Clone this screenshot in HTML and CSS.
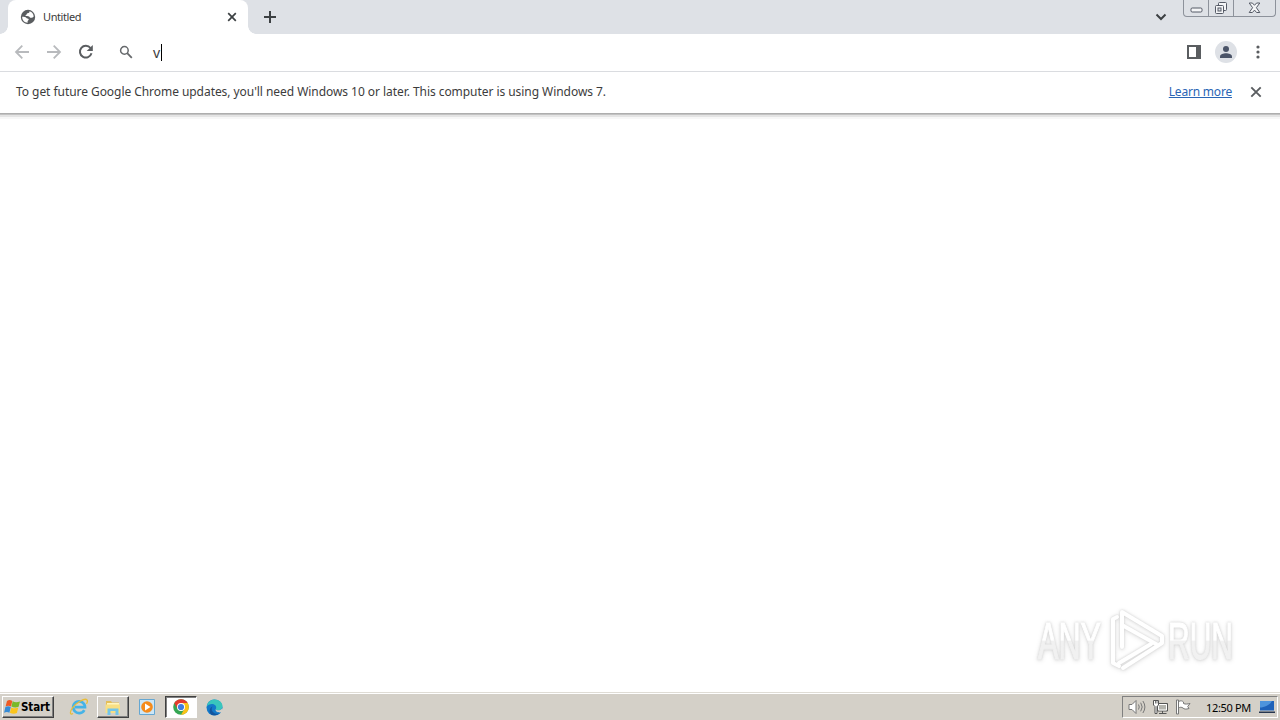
FILE: index.html
```
<!DOCTYPE html>
<html lang="en">

<head>
	<meta charset="UTF-8">
	<meta name="viewport" content="width=device-width, initial-scale=1.0">
	<title>Untitled</title>
	<link rel="stylesheet" href="styles.css">
</head>

<body>
	<div class="browser">
		<div class="tab-strip">
			<div class="tab">
				<svg class="globe" width="16" height="16" viewBox="0 0 16 16">
					<circle cx="8" cy="8" r="7.2" fill="#5a5d60"/>
					<path d="M2.200 7.800c1.800 0 3.500.2 4.300 1.200.6.800 1.800.3 2.200 1.300.3.900-.9 1.200-1.100 2-.1.600 0 1 .1 1.500C4.400 13.800 2 11 2.200 7.800zM9.500 2.300c0 1.500-.6 1.900-1.900 2-1.200.2-.6 1.600-1.800 1.800-.5.200-.5.900.2 1 1.300.1 3.300-.1 3.700 1.100.3.800 1.400.6 2.300.5.700-.1 1.300-.6 1.700-1.300C13.600 5.200 12.200 3 9.500 2.300z" fill="#fff"/>
				</svg>
				<span class="tab-title">Untitled</span>
				<svg class="tab-close" width="10" height="10" viewBox="0 0 10 10"><path d="M1.200 1.200l7.600 7.600M8.800 1.200L1.200 8.800" stroke="#3c4043" stroke-width="1.700"/></svg>
			</div>
			<svg class="new-tab" width="12" height="12" viewBox="0 0 12 12"><path d="M6 0v12M0 6h12" stroke="#3c4043" stroke-width="2"/></svg>
			<svg class="tab-search" width="12" height="8" viewBox="0 0 12 8"><path d="M1.500 1.500L6 6l4.500-4.500" fill="none" stroke="#3c4043" stroke-width="2"/></svg>
			<div class="window-buttons">
				<div class="win-btn min">
					<svg width="13" height="6" viewBox="0 0 13 6"><rect x="1" y="1" width="11" height="4" rx="1.200" fill="#f4f5f7" stroke="#555a66"/></svg>
				</div>
				<div class="win-btn max">
					<svg width="14" height="14" viewBox="0 0 14 14" fill="#f4f5f7" stroke="#555a66"><rect x="4.500" y="1.500" width="8" height="8" rx="1"/><rect x="1.500" y="4.500" width="8" height="8" rx="1"/><rect x="4" y="7" width="3" height="3" fill="#dee1e6"/></svg>
				</div>
				<div class="win-btn close">
					<svg width="13" height="12" viewBox="0 0 13 12"><path d="M1.200 1h3.200l2.100 2.300L8.600 1h3.200L8.400 5.700l3.400 4.800H8.600L6.500 8.100l-2.100 2.400H1.200l3.400-4.800z" fill="#f4f5f7" stroke="#555a66"/></svg>
				</div>
			</div>
		</div>

		<div class="toolbar">
			<svg class="nav-icon back" width="16" height="16" viewBox="0 0 16 16"><path d="M15 8H2M8.300 1.700L2 8l6.300 6.300" fill="none" stroke="#b8babd" stroke-width="1.800"/></svg>
			<svg class="nav-icon" width="16" height="16" viewBox="0 0 16 16"><path d="M1 8h13M7.700 1.700L14 8l-6.300 6.300" fill="none" stroke="#b8babd" stroke-width="1.800"/></svg>
			<svg class="nav-icon" width="16" height="16" viewBox="0 0 16 16"><path d="M13.500 9.300A5.900 5.900 0 1 1 12.500 4" fill="none" stroke="#5a5d60" stroke-width="2"/><path d="M14.800 1v6H8.700z" fill="#5a5d60"/></svg>
			<svg class="search-icon" width="14" height="14" viewBox="0 0 14 14" fill="none" stroke="#66696c"><circle cx="5.400" cy="5.400" r="3.800" stroke-width="1.500"/><path d="M8.200 8.200l4.600 4.600" stroke-width="1.800"/></svg>
			<div class="address"><span>v</span><i class="caret"></i></div>
			<svg class="side-panel" width="14" height="14" viewBox="0 0 14 14"><path d="M1 1h12v12H1z" fill="#fff" stroke="#5a5d60" stroke-width="2"/><path d="M9 0h5v14H9z" fill="#5a5d60"/></svg>
			<svg class="avatar" width="22" height="22" viewBox="0 0 22 22"><circle cx="11" cy="11" r="11" fill="#dee1e6"/><circle cx="11" cy="8" r="3" fill="#4b5468"/><path d="M5 17v-1.500c0-2.300 3.500-3.300 6-3.300s6 1 6 3.300V17z" fill="#4b5468"/></svg>
			<svg class="menu-dots" width="4" height="14" viewBox="0 0 4 14" fill="#5a5d60"><circle cx="2" cy="2" r="1.600"/><circle cx="2" cy="7" r="1.600"/><circle cx="2" cy="12" r="1.600"/></svg>
		</div>

		<div class="infobar">
			<span class="infobar-text">To get future Google Chrome updates, you'll need Windows 10 or later. This computer is using Windows 7.</span>
			<a class="learn-more" href="#">Learn more</a>
			<svg width="12" height="12" viewBox="0 0 12 12"><path d="M1.300 1.300l9.400 9.400M10.700 1.300l-9.400 9.400" stroke="#5a5d60" stroke-width="1.900"/></svg>
		</div>

		<div class="page">
			<svg class="watermark" width="206" height="70" viewBox="0 0 206 70">
				<defs>
					<linearGradient id="wmFill" gradientUnits="userSpaceOnUse" x1="0" y1="16" x2="0" y2="56">
						<stop offset="0.480" stop-color="#fff"/>
						<stop offset="0.500" stop-color="#f1f1f1"/>
					</linearGradient>
				</defs>
				<g class="wm-text" fill="url(#wmFill)" stroke="url(#wmFill)">
					<text x="7" y="54" textLength="63" lengthAdjust="spacingAndGlyphs">ANY</text>
					<text x="137" y="54" textLength="65" lengthAdjust="spacingAndGlyphs">RUN</text>
				</g>
				<g class="wm-logo">
					<path d="M86 12l-4 2v44l6 3"/>
					<path d="M91 42V7l40 24"/>
					<path d="M91 20l34 19"/>
					<path d="M88 58l32-19"/>
					<path d="M92 63l39-25v-6"/>
				</g>
			</svg>
		</div>
	</div>

	<div class="taskbar">
		<div class="start">
			<svg width="17" height="16" viewBox="0 0 17 16">
				<path d="M3 2c2-1.400 3.600-1 5.300 0L7 7.500c-1.800-1-3.500-1-5.400 0z" fill="#ee5a24"/>
				<path d="M8.700 2.300c2 1.200 4.400 1.300 7.300.2l-1.400 5.300c-2.500 1.100-4.900.8-7.200-.2z" fill="#79b928"/>
				<path d="M1.400 8.100c1.900-1 3.600-1 5.400 0l-1.400 5.700c-1.600-1-3.500-1-5.300 0z" fill="#368bd6"/>
				<path d="M7.300 8.400c2 1.100 4.400 1.300 7 .2l-1.400 5.500c-2.400 1-4.700.8-7-.3z" fill="#fbc51d"/>
			</svg>
			<span>Start</span>
		</div>
		<div class="task ie">
			<svg width="20" height="18" viewBox="0 0 20 18" fill="none">
				<path d="M15.300 12.100A5.900 5.900 0 1 1 16 9.200H6" stroke="#45b3e7" stroke-width="2.700"/>
				<path d="M4 15.500C.8 17.500.5 14 3.500 9.900 7.500 4.500 15.800-.6 18 2c.8 1 .3 2.500-.5 3.800" stroke="#e9bd38" stroke-width="1.300"/>
			</svg>
		</div>
		<div class="task raised">
			<svg width="18" height="17" viewBox="0 0 18 17">
				<path d="M2 2h5l1 1.500h7V14H2z" fill="#e4be58"/>
				<path d="M3 4h12v4H3z" fill="#fff5bd"/>
				<path d="M1.500 5.500h14.500V14H1.500z" fill="#f8df83"/>
				<path d="M3.500 16V9.500h11V16h-3v-4h-5v4z" fill="#73c5e9"/>
			</svg>
		</div>
		<div class="task media">
			<svg width="16" height="16" viewBox="0 0 16 16">
				<path d="M.5.500h15v15H.5z" fill="#cce6f6" stroke="#65a7d2"/>
				<circle cx="8" cy="8" r="5.800" fill="#f58b1b"/>
				<path d="M6 4.500L11.500 8 6 11.500z" fill="#fff"/>
			</svg>
		</div>
		<div class="task pressed">
			<svg width="16" height="16" viewBox="0 0 16 16">
				<circle cx="8" cy="8" r="7.800" fill="#35a653"/>
				<path d="M1.250 4.100A7.800 7.800 0 0 1 14.750 4.100H8L4.600 10z" fill="#e33b2e"/>
				<path d="M14.750 4.100A7.800 7.800 0 0 1 8 15.800l3.400-5.900L8 4.100z" fill="#fbc116"/>
				<circle cx="8" cy="8" r="4" fill="#fff"/>
				<circle cx="8" cy="8" r="3.100" fill="#3f7de0"/>
			</svg>
		</div>
		<div class="task edge">
			<svg width="17" height="17" viewBox="0 0 17 17">
				<circle cx="8.500" cy="8.500" r="8" fill="#1379c9"/>
				<path d="M.7 7.500C1.500 3 4.800.5 8.500.5c4.600 0 8 3.300 8 6.500 0 2.700-1.800 4.300-4.300 4.300-1.800 0-2.800-.6-2.300-1.500C11 7.500 9 5 6 5 3.600 5 1.700 6 .7 7.500z" fill="#39c6bd"/>
				<path d="M9.900 9.800c-.5.900.5 1.500 2.300 1.500 1.500 0 2.700-.5 3.500-1.500l1.300 1-.8 2.200c-3 1-7.800.2-6.300-3.200z" fill="#d4d0c8"/>
				<path d="M6.500 7.500c-2.400 3.300.5 8 6.500 7.300-2 1.500-5 2-7.500.9C3 14.500 2.800 9 6.500 7.500z" fill="#13549d"/>
			</svg>
		</div>
		<div class="tray">
			<svg width="18" height="16" viewBox="0 0 18 16" fill="none">
				<path d="M1 5.500h3L8 1.500v13l-4-4H1z" fill="#fff" stroke="#777"/>
				<path d="M10.500 5.500q1.500 2.500 0 5M12.700 3.700q3 4.300 0 8.600M14.900 2q4 6 0 12" stroke="#777"/>
			</svg>
			<svg width="17" height="16" viewBox="0 0 17 16">
				<path d="M5.500 4.500h10v7.500h-10z" fill="#b4b4ae" stroke="#555"/>
				<path d="M6.500 5.500h8v5.500h-8z" fill="none" stroke="#fff"/>
				<path d="M10.500 12v2M7 14.500h7.500" stroke="#555"/>
				<path d="M1.500 1.500h5V6L5 7.500v7H3v-7L1.500 6z" fill="#fff" stroke="#555"/>
				<path d="M3.500 2v2.500M5 2v2.500" stroke="#777"/>
			</svg>
			<svg width="17" height="16" viewBox="0 0 17 16">
				<path d="M3.500 2.500c2.500-1.300 4-.5 5 .5v1.500c2 1 4 .5 6.500 0l-2.300 3L14 9.500c-3 1-5 .7-6-.5-1.500-1-3-1-4.500 0z" fill="#fff" stroke="#777"/>
				<path d="M1.500 1h2v14h-2z" fill="#fff" stroke="#777"/>
			</svg>
			<span class="clock">12:50 PM</span>
			<svg class="show-desktop" width="16" height="14" viewBox="0 0 16 14">
				<path d="M1 1h14v9.500H1z" fill="#1f62b9"/>
				<path d="M1 7.500C5 7.500 11 5 13 1H1z" fill="#4e94dc"/>
				<path d="M0 11.500h16V13H0z" fill="#26364f"/>
			</svg>
		</div>
	</div>
</body>

</html>
```
FILE: styles.css
```
* {
	box-sizing: border-box;
}

body {
	margin: 0;
	width: 1280px;
	height: 720px;
	overflow: hidden;
	display: flex;
	flex-direction: column;
	background: #fff;
	color: #3c3c3c;
	font-family: "Noto Sans", Tahoma, sans-serif;
}

svg {
	display: block;
	flex-shrink: 0;
}

.browser {
	flex: 1;
	display: flex;
	flex-direction: column;
}

/* tabs */
.tab-strip {
	height: 34px;
	background: #dee1e6;
	display: flex;
	align-items: center;
	padding-left: 8px;
}

.tab {
	position: relative;
	width: 240px;
	height: 34px;
	background: #fff;
	border-radius: 8px 8px 0 0;
	display: flex;
	align-items: center;
	padding: 0 11px 0 12px;
}

/* curved feet of the active tab */
.tab::before,
.tab::after {
	content: "";
	position: absolute;
	bottom: 0;
	width: 8px;
	height: 8px;
}

.tab::before {
	left: -8px;
	background: radial-gradient(circle at 0 0, #dee1e6 7.5px, #fff 8px);
}

.tab::after {
	right: -8px;
	background: radial-gradient(circle at 100% 0, #dee1e6 7.5px, #fff 8px);
}

.tab-title {
	flex: 1;
	margin-left: 7px;
	padding-bottom: 2px;
	font-size: 11px;
	letter-spacing: -0.4px;
}

.new-tab {
	margin-left: 16px;
}

.tab-search {
	margin-left: auto;
	margin-right: 16px;
}

.window-buttons {
	align-self: flex-start;
	display: flex;
	width: 93px;
	height: 17px;
	margin-right: 4px;
	border: 1px solid #8d929b;
	border-top: 0;
	border-radius: 0 0 4px 4px;
}

.win-btn {
	display: flex;
	justify-content: center;
	align-items: center;
	width: 24px;
}

.win-btn.min {
	padding-top: 4px;
}

.win-btn.close {
	flex: 1;
}

.win-btn + .win-btn {
	border-left: 1px solid #8d929b;
}

.win-btn.max {
	width: 25px;
}

/* toolbar */
.toolbar {
	height: 38px;
	border-bottom: 1px solid #dadce0;
	display: flex;
	align-items: center;
	gap: 16px;
	padding: 0 20px 1px 14px;
}

.search-icon {
	margin-left: 9px;
}

.address {
	flex: 1;
	display: flex;
	align-items: center;
	margin-left: 4px;
	font-size: 14px;
}

.caret {
	width: 1px;
	height: 17px;
	background: #000;
	margin-left: 1px;
}

.side-panel {
	margin-right: -2px;
}

.menu-dots {
	margin-left: 3px;
}

/* infobar */
.infobar {
	height: 42px;
	display: flex;
	align-items: center;
	padding: 0 18px 1px 16px;
	border-bottom: 1px solid #aeaeae;
	box-shadow: 0 1px 0 #c2c2c2, 0 3px 0 #e4e4e4, 0 5px 0 #f7f7f7;
}

.infobar-text {
	flex: 1;
	padding-bottom: 1px;
	font-size: 12px;
	letter-spacing: -0.053px;
	white-space: nowrap;
}

.learn-more {
	color: #2a65b5;
	padding-bottom: 1px;
	font-size: 12px;
	letter-spacing: -0.2px;
	margin-right: 18px;
}

/* page */
.page {
	flex: 1;
	display: flex;
	justify-content: flex-end;
	align-items: flex-end;
	padding: 0 43px 17px 0;
}

.watermark {
	filter: drop-shadow(0 0 1px #d2d2d2) drop-shadow(0 1px 2px #e4e4e4);
}

.wm-text {
	font-family: "Liberation Sans", Arial, sans-serif;
	font-size: 51px;
	stroke-width: 1.2px;
}

.wm-logo {
	fill: none;
	stroke: #fff;
	stroke-width: 4px;
	stroke-linecap: round;
	stroke-linejoin: round;
}

/* taskbar */
.taskbar {
	height: 28px;
	background: #d4d0c8;
	border-top: 1px solid #dfdcd5;
	box-shadow: inset 0 1px 0 #fff;
	display: flex;
	align-items: center;
	padding: 2px 2px 1px;
}

.start {
	width: 52px;
	height: 22px;
	display: flex;
	align-items: center;
	padding-left: 1px;
	border: 1px solid #404040;
	border-top-color: #fff;
	border-left-color: #fff;
	box-shadow: inset -1px -1px 0 #808080;
	color: #000;
	font: bold 11.5px "DejaVu Sans Condensed", Tahoma, sans-serif;
	letter-spacing: -0.1px;
}

.task {
	width: 32px;
	height: 22px;
	display: flex;
	align-items: center;
	justify-content: center;
}

.ie {
	margin-left: 9px;
}

.task.raised {
	margin-left: 2px;
	border: 1px solid #404040;
	border-top-color: #fff;
	border-left-color: #fff;
	box-shadow: inset -1px -1px 0 #808080;
}

.task.media {
	margin-left: 2px;
}

.task.pressed {
	margin-left: 2px;
	background: #fff;
	border: 1px solid #fff;
	border-top-color: #404040;
	border-left-color: #404040;
	box-shadow: inset 1px 1px 0 #808080;
}

.task.edge {
	margin-left: 1px;
}

.tray {
	margin-left: auto;
	width: 156px;
	height: 22px;
	display: flex;
	align-items: center;
	gap: 6px;
	padding-left: 5px;
	border: 1px solid #fff;
	border-top-color: #808080;
	border-left-color: #808080;
}

.clock {
	width: 47px;
	color: #000;
	font-size: 11px;
	letter-spacing: -0.35px;
	margin-left: 8px;
	white-space: nowrap;
}
```
